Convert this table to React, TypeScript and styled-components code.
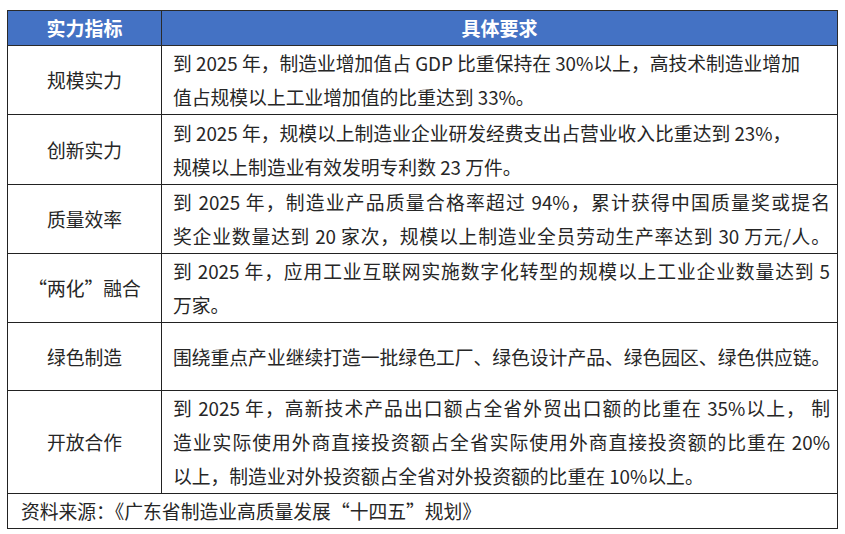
import React from "react";
import styled, { createGlobalStyle } from "styled-components";

const Global = createGlobalStyle`
  html, body { margin: 0; padding: 0; background: #ffffff; }
  body { font-family: "Noto Sans CJK SC", "Noto Sans", sans-serif; }
`;

const Page = styled.div`
  padding: 10px 7px 0 7px;
  width: 845px;
  box-sizing: border-box;
`;

const Table = styled.table`
  width: 831px;
  border-collapse: collapse;
  table-layout: fixed;
  color: #262626;
  font-size: 18.8px;
`;

const HeadCell = styled.th`
  background: #4472c4;
  color: #ffffff;
  font-weight: 700;
  font-size: 19px;
  height: 34px;
  padding: 0;
  border: 1px solid #2a2a2a;
  text-align: center;
  line-height: 34px;
`;

const NameCell = styled.td`
  border: 1px solid #222;
  text-align: center;
  vertical-align: middle;
  padding: 0;
  width: 153px;
  line-height: 34px;
`;

const DescCell = styled.td`
  border: 1px solid #222;
  padding: 0 7px 0 11px;
  vertical-align: middle;
  height: ${(p: { $h: number }) => p.$h}px;
`;

const Line = styled.div<{ $justify?: boolean }>`
  line-height: 34px;
  white-space: nowrap;
  text-align: ${(p) => (p.$justify ? "justify" : "left")};
  text-align-last: ${(p) => (p.$justify ? "justify" : "left")};
`;

const FootCell = styled.td`
  border: 1px solid #222;
  padding: 0 0 0 13px;
  height: 34px;
  line-height: 34px;
  text-align: left;
`;

type L = { t: string; j?: boolean };
const rows: { name: string; h: number; lines: L[] }[] = [
  {
    name: "规模实力",
    h: 67,
    lines: [
      { t: "到 2025 年，制造业增加值占 GDP 比重保持在 30%以上，高技术制造业增加" },
      { t: "值占规模以上工业增加值的比重达到 33%。" },
    ],
  },
  {
    name: "创新实力",
    h: 69,
    lines: [
      { t: "到 2025 年，规模以上制造业企业研发经费支出占营业收入比重达到 23%，" },
      { t: "规模以上制造业有效发明专利数 23 万件。" },
    ],
  },
  {
    name: "质量效率",
    h: 68,
    lines: [
      { t: "到 2025  年，制造业产品质量合格率超过 94%，累计获得中国质量奖或提名", j: true },
      { t: "奖企业数量达到 20 家次，规模以上制造业全员劳动生产率达到 30 万元/人。", j: true },
    ],
  },
  {
    name: "“两化”融合",
    h: 68,
    lines: [
      { t: "到 2025 年，应用工业互联网实施数字化转型的规模以上工业企业数量达到 5", j: true },
      { t: "万家。" },
    ],
  },
  {
    name: "绿色制造",
    h: 67,
    lines: [{ t: "围绕重点产业继续打造一批绿色工厂、绿色设计产品、绿色园区、绿色供应链。", j: true }],
  },
  {
    name: "开放合作",
    h: 102,
    lines: [
      { t: "到 2025 年，高新技术产品出口额占全省外贸出口额的比重在 35%以上， 制", j: true },
      { t: "造业实际使用外商直接投资额占全省实际使用外商直接投资额的比重在 20%", j: true },
      { t: "以上，制造业对外投资额占全省对外投资额的比重在 10%以上。" },
    ],
  },
];

export default function App() {
  return (
    <Page>
      <Global />
      <Table>
        <thead>
          <tr>
            <HeadCell style={{ width: 153 }}>实力指标</HeadCell>
            <HeadCell>具体要求</HeadCell>
          </tr>
        </thead>
        <tbody>
          {rows.map((r) => (
            <tr key={r.name}>
              <NameCell>{r.name}</NameCell>
              <DescCell $h={r.h}>
                {r.lines.map((l, i) => (
                  <Line key={i} $justify={l.j}>
                    {l.t}
                  </Line>
                ))}
              </DescCell>
            </tr>
          ))}
          <tr>
            <FootCell colSpan={2}>资料来源：《广东省制造业高质量发展“十四五”规划》</FootCell>
          </tr>
        </tbody>
      </Table>
    </Page>
  );
}
